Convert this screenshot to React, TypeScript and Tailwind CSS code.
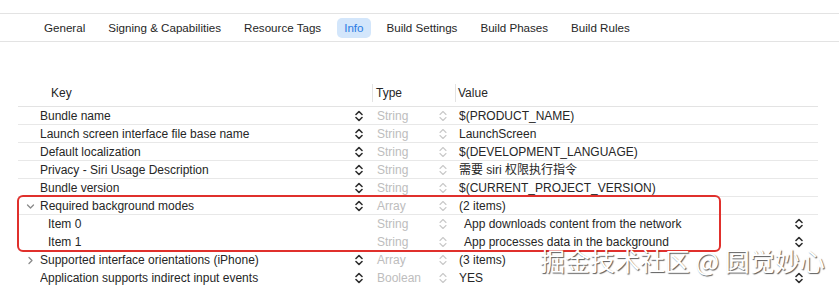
import React from "react";

const Stepper = ({ light = false }: { light?: boolean }) => (
  <svg width="8" height="12" viewBox="0 0 8 12" className="shrink-0">
    <path
      d="M1 4.5 L4 1.5 L7 4.5 M1 7.5 L4 10.5 L7 7.5"
      fill="none"
      stroke={light ? "#c9c9c9" : "#2e2e2e"}
      strokeWidth={light ? 1.1 : 1.6}
      strokeLinecap="round"
      strokeLinejoin="round"
    />
  </svg>
);

const Chevron = ({ open }: { open: boolean }) => (
  <svg width="9" height="9" viewBox="0 0 9 9" className="shrink-0">
    <path
      d={open ? "M1.5 3 L4.5 6 L7.5 3" : "M3 1.5 L6 4.5 L3 7.5"}
      fill="none"
      stroke="#8a8a8a"
      strokeWidth="1.3"
      strokeLinecap="round"
      strokeLinejoin="round"
    />
  </svg>
);

type Row = {
  key: string;
  type: string;
  value: string;
  child?: boolean;
  disclosure?: "open" | "closed";
  line?: boolean;
  rightStepper?: boolean;
};

const rows: Row[] = [
  { key: "Bundle name", type: "String", value: "$(PRODUCT_NAME)", line: true },
  { key: "Launch screen interface file base name", type: "String", value: "LaunchScreen", line: true },
  { key: "Default localization", type: "String", value: "$(DEVELOPMENT_LANGUAGE)", line: true },
  { key: "Privacy - Siri Usage Description", type: "String", value: "需要 siri 权限执行指令", line: true },
  { key: "Bundle version", type: "String", value: "$(CURRENT_PROJECT_VERSION)", line: true },
  { key: "Required background modes", type: "Array", value: "(2 items)", disclosure: "open", line: true },
  { key: "Item 0", type: "String", value: "App downloads content from the network", child: true, rightStepper: true },
  { key: "Item 1", type: "String", value: "App processes data in the background", child: true, rightStepper: true },
  { key: "Supported interface orientations (iPhone)", type: "Array", value: "(3 items)", disclosure: "closed" },
  { key: "Application supports indirect input events", type: "Boolean", value: "YES", rightStepper: true },
];

const tabs = ["General", "Signing & Capabilities", "Resource Tags", "Info", "Build Settings", "Build Phases", "Build Rules"];

export default function App() {
  return (
    <div
      className="relative w-[839px] h-[286px] bg-white overflow-hidden text-[12px] text-[#262626]"
      style={{ fontFamily: '"Liberation Sans", "Noto Sans CJK SC", sans-serif' }}
    >
      <div className="h-[13px]" />
      <div className="h-[29px] border-y border-[#e3e3e3] flex items-center pl-[37px] gap-[9px] text-[11.6px]">
        {tabs.map((t) => (
          <div
            key={t}
            className={
              t === "Info"
                ? "px-[7px] h-[20px] flex items-center rounded-[5px] bg-[#d3e6fb] text-[#2a7be4]"
                : "px-[7px] h-[20px] flex items-center"
            }
          >
            {t}
          </div>
        ))}
      </div>

      <div className="mt-[38px] ml-[18px] w-[800px]">
        {/* header */}
        <div className="grid grid-cols-[354px_83px_1fr] h-[27px] border-b border-[#e3e3e3] items-center">
          <div className="pl-[33px]">Key</div>
          <div className="flex items-center h-[18px] border-l border-[#e3e3e3] pl-[3px]">Type</div>
          <div className="flex items-center h-[18px] border-l border-[#e3e3e3] pl-[2px]">Value</div>
        </div>

        {rows.map((r) => (
          <div
            key={r.key}
            className={
              "grid grid-cols-[354px_83px_1fr] h-[18px] items-center " +
              (r.line ? "border-b border-[#e8e8e8]" : "")
            }
          >
            <div className="flex items-center pr-[9px]">
              <div className="w-[22px] flex justify-center pl-[2px]">
                {r.disclosure && <Chevron open={r.disclosure === "open"} />}
              </div>
              <div className={"flex-1 truncate " + (r.child ? "pl-[8px]" : "")}>{r.key}</div>
              {!r.child && <Stepper />}
            </div>
            <div className="flex items-center pl-[5px] pr-[8px] text-[#bdbdbd]">
              <div className="flex-1">{r.type}</div>
              <Stepper light />
            </div>
            <div className={"flex items-center pr-[15px] " + (r.child ? "pl-[9px]" : "pl-[4px]")}>
              <div className="flex-1">{r.value}</div>
              {r.rightStepper && <Stepper />}
            </div>
          </div>
        ))}
      </div>

      {/* red highlight */}
      <div className="absolute left-[17px] top-[195px] w-[704px] h-[57px] border-2 border-[#e0302c] rounded-[6px]" />

      {/* watermark */}
      <div
        className="absolute left-[540px] top-[245px] text-[25px] leading-[30px] text-white [text-shadow:1px_1px_1px_rgba(0,0,0,0.65)] whitespace-nowrap"
        style={{ fontFamily: '"Noto Sans CJK SC", sans-serif' }}
      >
        掘金技术社区 @ 圆觉妙心
      </div>
    </div>
  );
}
